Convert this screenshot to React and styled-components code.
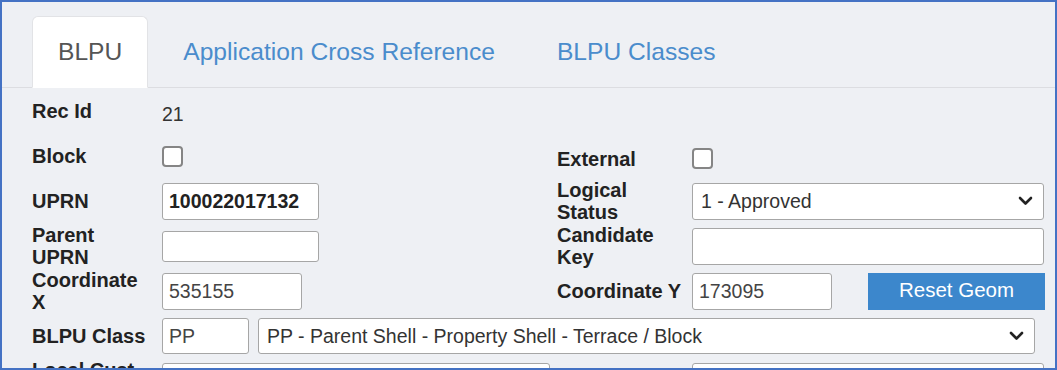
import React from 'react'
import styled, { createGlobalStyle } from 'styled-components'

const GlobalStyle = createGlobalStyle`
  html, body {
    margin: 0;
    padding: 0;
    background: #ffffff;
  }
  * { box-sizing: border-box; }
`

const Chevron = () => (
  <svg width="15" height="10" viewBox="0 0 15 10">
    <polyline points="2,2 7.5,7.5 13,2" fill="none" stroke="#222" strokeWidth="2.6" strokeLinecap="round" strokeLinejoin="round" />
  </svg>
)

const App = () => {
  return (
    <>
      <GlobalStyle />
      <Frame>
        <TabBar>
          <Tab $active>BLPU</Tab>
          <Tab>Application Cross Reference</Tab>
          <Tab>BLPU Classes</Tab>
        </TabBar>
        <Form>
          <Row>
            <Half>
              <Label>Rec Id</Label>
              <Value>21</Value>
            </Half>
            <Half />
          </Row>
          <Row>
            <Half>
              <Label>Block</Label>
              <Check type="checkbox" />
            </Half>
            <Half $shift={5}>
              <Label $w={135}>External</Label>
              <Check type="checkbox" />
            </Half>
          </Row>
          <Row>
            <Half>
              <Label>UPRN</Label>
              <Input $w={157} $bold defaultValue="100022017132" />
            </Half>
            <Half>
              <Label $w={135}>Logical<br />Status</Label>
              <Select>
                <span>1 - Approved</span>
                <Chevron />
              </Select>
            </Half>
          </Row>
          <Row>
            <Half>
              <Label>Parent<br />UPRN</Label>
              <Input $w={157} $h={31} defaultValue="" />
            </Half>
            <Half>
              <Label $w={135}>Candidate<br />Key</Label>
              <Input $w={352} defaultValue="" />
            </Half>
          </Row>
          <Row>
            <Half>
              <Label>Coordinate<br />X</Label>
              <Input $w={140} defaultValue="535155" />
            </Half>
            <Half>
              <Label $w={135}>Coordinate Y</Label>
              <Input $w={140} defaultValue="173095" />
              <Button>Reset Geom</Button>
            </Half>
          </Row>
          <Row $single>
            <Label>BLPU Class</Label>
            <Input $w={87} $h={36} defaultValue="PP" />
            <Select $w={777} $h={36}>
              <span>PP - Parent Shell - Property Shell - Terrace / Block</span>
              <Chevron />
            </Select>
          </Row>
          <Row>
            <Half>
              <Label>Local Cust.<br />Code</Label>
              <Input $w={388} defaultValue="" />
            </Half>
            <Half>
              <Label $w={135}></Label>
              <Input $w={352} defaultValue="" />
            </Half>
          </Row>
        </Form>
      </Frame>
    </>
  )
}

const Frame = styled.div`
  width: 1057px;
  height: 370px;
  overflow: hidden;
  border: 2px solid #4472c4;
  background: #eef0f4;
  font-family: "Liberation Sans", Arial, sans-serif;
  color: #333;
`

const TabBar = styled.div`
  display: flex;
  align-items: flex-end;
  height: 86px;
  padding: 14px 0 0 30px;
  border-bottom: 1px solid #dcdde1;
`

const Tab = styled.div`
  display: flex;
  align-items: center;
  height: 72px;
  padding: ${p => (p.$active ? '0 25px' : '0 26px')};
  margin-right: 8px;
  margin-bottom: -1px;
  font-size: 24.6px;
  color: ${p => (p.$active ? '#555' : '#4a8ccc')};
  background: ${p => (p.$active ? '#ffffff' : 'transparent')};
  border: 1px solid ${p => (p.$active ? '#e2e3e6' : 'transparent')};
  border-bottom-color: ${p => (p.$active ? '#ffffff' : 'transparent')};
  border-radius: 6px 6px 0 0;
`

const Form = styled.div`
  padding: 1px 9px 0 30px;
  display: flex;
  flex-direction: column;
  gap: 1px;
`

const Row = styled.div`
  display: ${p => (p.$single ? 'flex' : 'grid')};
  grid-template-columns: 525px 1fr;
  align-items: center;
  min-height: 44px;
  gap: ${p => (p.$single ? '9px' : '0')};
  & > label:first-child { margin-right: -9px; }
`

const Half = styled.div`
  display: flex;
  align-items: center;
  margin-top: ${p => (p.$shift ? `${p.$shift}px` : '0')};
`

const Label = styled.label`
  flex: none;
  width: ${p => (p.$w ? `${p.$w}px` : '130px')};
  font-size: 20px;
  font-weight: 700;
  line-height: 22px;
  color: #222;
`

const Value = styled.span`
  font-size: 19.5px;
  margin-top: 6px;
  color: #333;
`

const Check = styled.input`
  appearance: none;
  margin: 0;
  width: 21px;
  height: 21px;
  background: #fff;
  border: 2px solid #858585;
  border-radius: 4px;
`

const Input = styled.input`
  width: ${p => `${p.$w}px`};
  height: ${p => (p.$h ? `${p.$h}px` : '37px')};
  padding: 0 6px;
  background: #fff;
  border: 1px solid #a6a6a6;
  border-radius: 3px;
  font-family: "Liberation Sans", Arial, sans-serif;
  font-size: 19.5px;
  font-weight: ${p => (p.$bold ? 700 : 400)};
  color: ${p => (p.$bold ? '#222' : '#444')};
  outline: none;
`

const Select = styled.div`
  display: flex;
  align-items: center;
  justify-content: space-between;
  width: ${p => (p.$w ? `${p.$w}px` : '352px')};
  height: ${p => (p.$h ? `${p.$h}px` : '37px')};
  padding: 0 10px 0 8px;
  background: #fff;
  border: 1px solid #a6a6a6;
  border-radius: 3px;
  font-size: 19.5px;
  color: #333;
`

const Button = styled.button`
  margin-left: 36px;
  width: 177px;
  height: 37px;
  border: none;
  background: #3c87cc;
  color: #fff;
  font-family: "Liberation Sans", Arial, sans-serif;
  font-size: 20.5px;
  padding: 0 0 2px;
`

export default App
